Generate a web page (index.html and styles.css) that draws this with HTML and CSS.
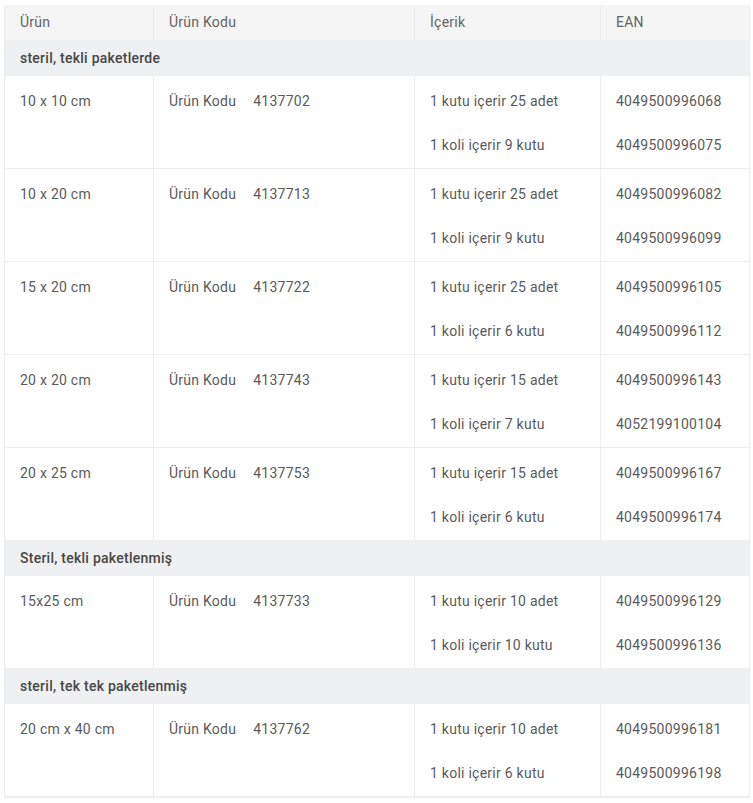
FILE: index.html
```html
<!DOCTYPE html>
<html lang="tr">
  <head>
    <meta name="viewport" content="width=device-width, initial-scale=1">
    <title>Ürün tablosu</title>
    <link rel="stylesheet" href="styles.css">
  </head>
  <body>
  <div id="wrap">
    <table id="products">
      <colgroup>
        <col class="c-urun">
        <col class="c-kod">
        <col class="c-icerik">
        <col class="c-ean">
      </colgroup>
      <thead>
        <tr><th>Ürün</th><th>Ürün Kodu</th><th>İçerik</th><th>EAN</th></tr>
      </thead>
      <tbody>
        <tr class="group"><td colspan="4">steril, tekli paketlerde</td></tr>
        <tr>
          <td>10 x 10 cm</td>
          <td><span class="label">Ürün Kodu</span>4137702</td>
          <td><p>1 kutu içerir 25 adet</p><p>1 koli içerir 9 kutu</p></td>
          <td><p>4049500996068</p><p>4049500996075</p></td>
        </tr>
        <tr>
          <td>10 x 20 cm</td>
          <td><span class="label">Ürün Kodu</span>4137713</td>
          <td><p>1 kutu içerir 25 adet</p><p>1 koli içerir 9 kutu</p></td>
          <td><p>4049500996082</p><p>4049500996099</p></td>
        </tr>
        <tr>
          <td>15 x 20 cm</td>
          <td><span class="label">Ürün Kodu</span>4137722</td>
          <td><p>1 kutu içerir 25 adet</p><p>1 koli içerir 6 kutu</p></td>
          <td><p>4049500996105</p><p>4049500996112</p></td>
        </tr>
        <tr>
          <td>20 x 20 cm</td>
          <td><span class="label">Ürün Kodu</span>4137743</td>
          <td><p>1 kutu içerir 15 adet</p><p>1 koli içerir 7 kutu</p></td>
          <td><p>4049500996143</p><p>4052199100104</p></td>
        </tr>
        <tr class="last">
          <td>20 x 25 cm</td>
          <td><span class="label">Ürün Kodu</span>4137753</td>
          <td><p>1 kutu içerir 15 adet</p><p>1 koli içerir 6 kutu</p></td>
          <td><p>4049500996167</p><p>4049500996174</p></td>
        </tr>
        <tr class="group"><td colspan="4">Steril, tekli paketlenmiş</td></tr>
        <tr class="last">
          <td>15x25 cm</td>
          <td><span class="label">Ürün Kodu</span>4137733</td>
          <td><p>1 kutu içerir 10 adet</p><p>1 koli içerir 10 kutu</p></td>
          <td><p>4049500996129</p><p>4049500996136</p></td>
        </tr>
        <tr class="group"><td colspan="4">steril, tek tek paketlenmiş</td></tr>
        <tr class="last">
          <td>20 cm x 40 cm</td>
          <td><span class="label">Ürün Kodu</span>4137762</td>
          <td><p>1 kutu içerir 10 adet</p><p>1 koli içerir 6 kutu</p></td>
          <td><p>4049500996181</p><p>4049500996198</p></td>
        </tr>
      </tbody>
    </table>
  </div>
  </body>
</html>
```
FILE: styles.css
```css
html, body {
  margin: 0;
  padding: 0;
  background: #fff;
  font-family: Roboto, "Liberation Sans", sans-serif;
  font-size: 14px;
  letter-spacing: 0.25px;
  color: #5a5a5a;
}

#wrap {
  padding: 5px 4px 0 4px;
}

#products {
  width: 745px;
  border-collapse: collapse;
  table-layout: fixed;
  border-left: 1px solid #ededed;
  border-right: 1px solid #ededed;
  border-bottom: 2px solid #ededed;
}

.c-urun { width: 149px; }
.c-kod { width: 261px; }
.c-icerik { width: 186px; }
.c-ean { width: 149px; }

#products th {
  background: #f5f5f5;
  color: #636363;
  font-weight: 400;
  text-align: left;
  padding: 7px 15px;
  line-height: 21px;
  height: 21px;
  border-left: 1px solid #ececec;
}

#products th:first-child {
  border-left: none;
}

#products td {
  vertical-align: top;
  padding: 14px 15px 12px 15px;
  line-height: 22px;
  height: 66px;
  border-left: 1px solid #ededed;
  border-bottom: 1px solid #ededed;
}

#products tr.last td {
  border-bottom: none;
}

#products td p {
  margin: 0 0 22px 0;
}

#products td p:last-child {
  margin-bottom: 0;
}

#products .group td {
  background: #eff0f1;
  color: #474747;
  font-weight: 500;
  padding: 7px 15px;
  height: 22px;
  border: none;
}

.label {
  margin-right: 17px;
}
```
